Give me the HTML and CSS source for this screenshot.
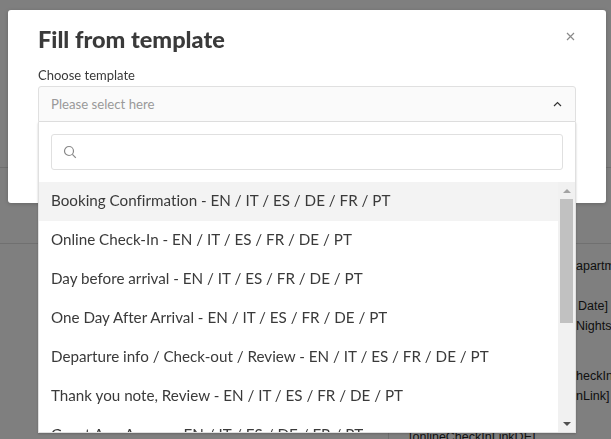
FILE: index.html
```html
<!DOCTYPE html>
<html lang="en">
<head>
    <meta charset="UTF-8">
    <title>Fill from template</title>
    <link rel="stylesheet" href="styles.css">
</head>
<body>
    <!-- page behind the modal -->
    <div class="page">
        <div class="page-rule page-rule-first"></div>
        <div class="page-rule page-rule-second"></div>
        <div class="page-text">
            <p class="line-tail line-top">[</p>
            <p class="line-tail line-apartment">apartment</p>
            <p class="line-tail line-date">Date]</p>
            <p class="line-tail line-nights">Nights]</p>
            <p class="line-tail line-checkin">heckIn</p>
            <p class="line-tail line-link">nLink]</p>
            <p class="line-de">[onlineCheckInLinkDE]</p>
        </div>
    </div>

    <div class="backdrop"></div>

    <div class="modal">
        <div class="modal-head">
            <h2 class="modal-title">Fill from template</h2>
            <svg class="modal-close" width="9" height="9" viewBox="0 0 9 9"><path d="M1 1l7 7M8 1l-7 7"/></svg>
        </div>
        <label class="field-label">Choose template</label>
    </div>

    <div class="select">
        <div class="select-trigger">
            <span>Please select here</span>
            <svg class="select-caret" width="9" height="6" viewBox="0 0 9 6"><path d="M1 5l3.5-3.5L8 5"/></svg>
        </div>
        <div class="select-panel">
            <div class="select-search">
                <div class="search-box">
                    <svg class="search-icon" width="14" height="14" viewBox="0 0 14 14"><circle cx="6" cy="6" r="4.5"/><path d="M9.4 9.4l3.4 3.4"/></svg>
                </div>
            </div>
            <div class="select-body">
                <ul class="option-list">
                    <li class="option option-active">Booking Confirmation - EN / IT / ES / DE / FR / PT</li>
                    <li class="option">Online Check-In - EN / IT / ES / FR / DE / PT</li>
                    <li class="option">Day before arrival - EN / IT / ES / FR / DE / PT</li>
                    <li class="option">One Day After Arrival - EN / IT / ES / FR / DE / PT</li>
                    <li class="option">Departure info / Check-out / Review - EN / IT / ES / FR / DE / PT</li>
                    <li class="option">Thank you note, Review - EN / IT / ES / FR / DE / PT</li>
                    <li class="option">Guest App Access - EN / IT / ES / DE / FR / PT</li>
                </ul>
                <div class="scrollbar">
                    <span class="scroll-arrow scroll-up"></span>
                    <div class="scroll-track"><div class="scroll-thumb"></div></div>
                    <span class="scroll-arrow scroll-down"></span>
                </div>
            </div>
        </div>
    </div>
</body>
</html>
```
FILE: styles.css
```css
/* page */
html, body {
    margin: 0;
    height: 100%;
    overflow: hidden;
}
body {
    font-family: Lato, "Liberation Sans", sans-serif;
    font-variant-ligatures: none;
    color: #3a3a3a;
    background: #fff;
}
.page-rule {
    position: absolute;
    left: 0;
    right: 0;
    height: 1px;
    background: #e0e0e0;
}
.page-rule-first {
    top: 167px;
}
.page-rule-second {
    top: 243px;
}
.page-text {
    position: absolute;
    left: 388px;
    top: 167px;
    bottom: 0;
    right: 0;
    padding-left: 18px;
    border-left: 1px solid #dedede;
    font-family: "Liberation Sans", sans-serif;
    font-size: 12.5px;
    line-height: 20px;
    color: #222;
}
.page-text p {
    margin: 0;
    white-space: nowrap;
}
.page-text .line-tail {
    padding-left: 169px;
}
.page-text .line-top {
    padding-left: 204px;
}
.page-text .line-apartment {
    margin-top: 69px;
}
.page-text .line-date {
    margin-top: 20px;
    padding-left: 171px;
}
.page-text .line-checkin {
    margin-top: 30px;
}
.page-text .line-de {
    margin-top: 21px;
    margin-left: 2px;
}
.backdrop {
    position: fixed;
    inset: 0;
    background: rgba(0, 0, 0, 0.5);
}

/* modal */
.modal {
    position: absolute;
    left: 8px;
    top: 10px;
    width: 598px;
    height: 193px;
    box-sizing: border-box;
    padding: 16px 31px 16px 30px;
    background: #fff;
    border-radius: 3px;
    box-shadow: 0 1px 4px rgba(0, 0, 0, 0.2);
}
.modal-head {
    display: flex;
    justify-content: space-between;
    align-items: flex-start;
}
.modal-title {
    margin: 0;
    font-size: 23.5px;
    font-weight: 900;
    line-height: 26px;
    color: #3a3a3a;
}
.modal-close {
    margin-top: 6px;
    fill: none;
    stroke: #8a8a8a;
    stroke-width: 1.2;
}
.field-label {
    display: block;
    margin-top: 15px;
    font-size: 13px;
    line-height: 17px;
}

/* select */
.select {
    position: absolute;
    left: 38px;
    top: 86px;
    width: 538px;
}
.select-trigger {
    display: flex;
    justify-content: space-between;
    align-items: center;
    height: 36px;
    box-sizing: border-box;
    padding: 0 13px 0 12px;
    background: #fafafa;
    border: 1px solid #e0e0e0;
    border-radius: 3px 3px 0 0;
    font-size: 13.2px;
    color: #999;
}
.select-caret {
    fill: none;
    stroke: #333;
    stroke-width: 1.2;
}
.select-panel {
    background: #fff;
    border: 1px solid #e0e0e0;
    border-top: none;
    box-shadow: 0 1px 2px rgba(0, 0, 0, 0.2);
}
.select-search {
    padding: 12px;
}
.search-box {
    display: flex;
    align-items: center;
    height: 36px;
    box-sizing: border-box;
    padding-left: 11px;
    border: 1px solid #e0e0e0;
    border-radius: 3px;
}
.search-icon {
    fill: none;
    stroke: #888;
    stroke-width: 1.2;
}
.select-body {
    display: flex;
    height: 250px;
    overflow: hidden;
}
.option-list {
    flex: 1;
    margin: 0;
    padding: 0;
    list-style: none;
}
.option {
    height: 39px;
    padding-left: 12px;
    font-size: 15.2px;
    line-height: 37px;
    white-space: nowrap;
}
.option-active {
    background: #f3f3f3;
}

/* scrollbar */
.scrollbar {
    display: flex;
    flex-direction: column;
    width: 17px;
    background: #f1f1f1;
}
.scroll-track {
    flex: 1;
    padding: 0 2px;
}
.scroll-thumb {
    height: 124px;
    background: #c1c1c1;
}
.scroll-arrow {
    display: block;
    width: 0;
    height: 0;
    margin: 7px auto 6px;
    border-left: 4px solid transparent;
    border-right: 4px solid transparent;
}
.scroll-up {
    border-bottom: 4px solid #a3a3a3;
}
.scroll-down {
    border-top: 4px solid #505050;
}
```
